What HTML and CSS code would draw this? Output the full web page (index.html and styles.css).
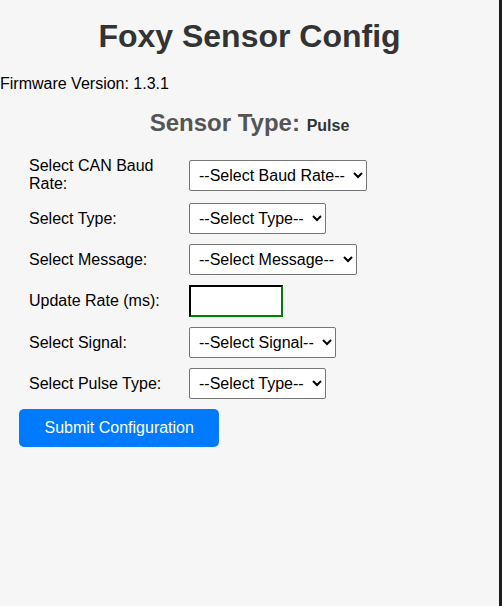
FILE: index.html
```html
<!DOCTYPE html>
<html lang="en">
<head>
<meta charset="utf-8">
<title>Foxy Sensor Config</title>
<link rel="stylesheet" href="styles.css">
</head>
<body>
<div class="page">
  <h1 class="title">Foxy Sensor Config</h1>
  <p class="firmware">Firmware Version: 1.3.1</p>
  <h2 class="sensor-type">Sensor Type: <span class="sensor-value">Pulse</span></h2>
  <form class="config-form">
    <div class="row">
      <label class="label" for="baud">Select CAN Baud Rate:</label>
      <select class="field" id="baud"><option>--Select Baud Rate--</option></select>
    </div>
    <div class="row">
      <label class="label" for="type">Select Type:</label>
      <select class="field" id="type"><option>--Select Type--</option></select>
    </div>
    <div class="row">
      <label class="label" for="msg">Select Message:</label>
      <select class="field" id="msg"><option>--Select Message--</option></select>
    </div>
    <div class="row">
      <label class="label" for="rate">Update Rate (ms):</label>
      <input class="text-input" id="rate" type="text">
    </div>
    <div class="row">
      <label class="label" for="signal">Select Signal:</label>
      <select class="field" id="signal"><option>--Select Signal--</option></select>
    </div>
    <div class="row">
      <label class="label" for="pulse">Select Pulse Type:</label>
      <select class="field" id="pulse"><option>--Select Type--</option></select>
    </div>
    <button class="submit" type="button">Submit Configuration</button>
  </form>
</div>
</body>
</html>
```
FILE: styles.css
```css
html {
  background: #1c1c1c;
  margin: 0;
  padding: 0;
}
body {
  margin: 0 3px 0 0;
  min-height: 100vh;
  background: #f6f6f6;
  font-family: "Liberation Sans", Arial, sans-serif;
  color: #000;
}
.page {
  padding-top: 18px;
  display: flow-root;
}
.title {
  margin: 0 0 20px;
  font-size: 32px;
  text-align: center;
  color: #333;
}
.firmware {
  margin: 0 0 16px;
  font-size: 16px;
}
.sensor-type {
  margin: 0 0 20px;
  font-size: 24px;
  text-align: center;
  color: #555;
}
.sensor-value {
  font-size: 16px;
  color: #333;
}
.config-form {
  padding: 0 19px;
}
.row {
  display: flex;
  align-items: center;
  padding-left: 10px;
  margin-bottom: 10px;
}
.label {
  width: 150px;
  margin-right: 10px;
  font-size: 16px;
}
.field {
  font-family: "Liberation Sans", Arial, sans-serif;
  font-size: 16px;
  padding: 5px 5px;
  height: 31px;
  border: 1px solid #767676;
  border-radius: 2px;
  background: #fff;
  color: #000;
}
.text-input {
  box-sizing: border-box;
  width: 94px;
  height: 32px;
  border: 2px inset #008000;
  border-top-color: #003300;
  border-left-color: #003300;
  background: #fff;
  font-size: 16px;
  padding: 5px;
}
.submit {
  background: #007bff;
  color: #fff;
  border: none;
  border-radius: 5px;
  padding: 10px 25.5px;
  font-family: "Liberation Sans", Arial, sans-serif;
  font-size: 16px;
}
```
